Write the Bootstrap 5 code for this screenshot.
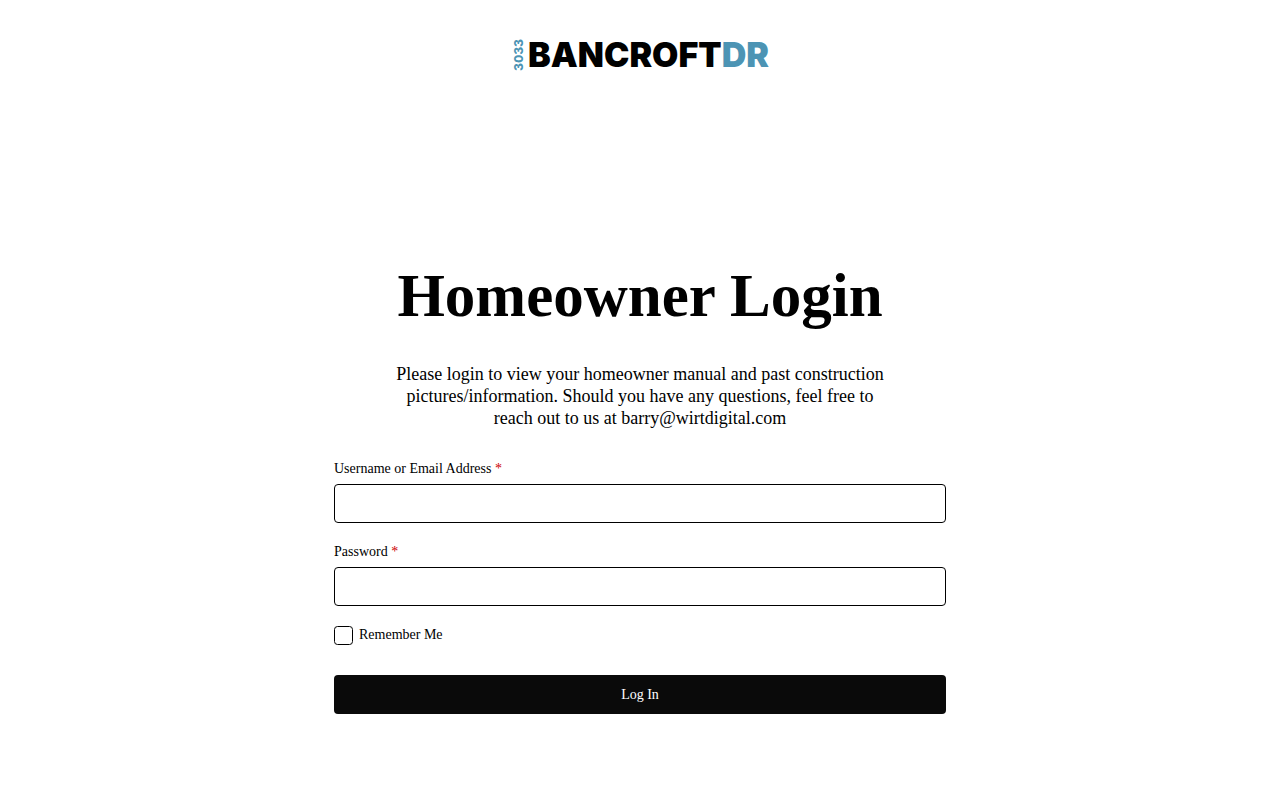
<!DOCTYPE html>
<html lang="en">
<head>
<meta charset="utf-8">
<meta name="viewport" content="width=device-width, initial-scale=1">
<title>Homeowner Login</title>
<link href="https://cdn.jsdelivr.net/npm/bootstrap@5.3.0/dist/css/bootstrap.min.css" rel="stylesheet">
<style>
  body { font-family: "Liberation Serif", "Times New Roman", serif; font-size: 14px; line-height: 20px; color: #000; background: #fff; }
  .site-header { padding-top: 32px; }
  .brand { font-family: Inter, sans-serif; font-weight: 900; color: #000; gap: 3px; height: 46px; padding-left: 2px; }
  .brand-number { writing-mode: vertical-rl; transform: rotate(180deg); font-size: 12px; line-height: 12px; font-weight: 800; color: #4c94b4; }
  .brand-name { font-size: 34px; line-height: 46px; }
  .brand-name span { color: #4c94b4; }
  .login { max-width: 612px; padding-top: 180px; }
  .login h1 { font-size: 61px; line-height: 76px; font-weight: 700; margin-bottom: 29px; }
  .intro { max-width: 500px; font-size: 18px; line-height: 22px; margin-bottom: 30px; }
  .form-label { margin-bottom: 5px; }
  .required { color: #c00; }
  .form-control { height: 39px; border: 1px solid #000; border-radius: 4px; }
  .field { margin-bottom: 19px; }
  .remember { gap: 6px; margin-bottom: 30px; }
  .form-check-input { width: 19px; height: 19px; border: 1px solid #000; }
  .btn-login { height: 39px; border: 0; border-radius: 4px; font-size: 14px; line-height: 20px; --bs-btn-bg: #0a0a0a; --bs-btn-color: #fff; --bs-btn-hover-bg: #333; --bs-btn-hover-color: #fff; }
</style>
</head>
<body>
<header class="site-header d-flex justify-content-center">
  <a href="#" class="brand d-flex align-items-center text-decoration-none">
    <span class="brand-number">3033</span>
    <span class="brand-name">BANCROFT<span>DR</span></span>
  </a>
</header>
<main class="login mx-auto">
  <h1 class="text-center">Homeowner Login</h1>
  <p class="intro mx-auto text-center">Please login to view your homeowner manual and past construction pictures/information. Should you have any questions, feel free to reach out to us at barry@wirtdigital.com</p>
  <form>
    <div class="field">
      <label class="form-label d-block" for="username">Username or Email Address <span class="required">*</span></label>
      <input class="form-control" type="text" id="username" required>
    </div>
    <div class="field">
      <label class="form-label d-block" for="password">Password <span class="required">*</span></label>
      <input class="form-control" type="password" id="password" required>
    </div>
    <div class="remember d-flex align-items-center">
      <input class="form-check-input m-0 flex-shrink-0" type="checkbox" id="remember">
      <label for="remember">Remember Me</label>
    </div>
    <button type="submit" class="btn btn-login w-100">Log In</button>
  </form>
</main>
<script src="https://cdn.jsdelivr.net/npm/bootstrap@5.3.0/dist/js/bootstrap.bundle.min.js"></script>
</body>
</html>
